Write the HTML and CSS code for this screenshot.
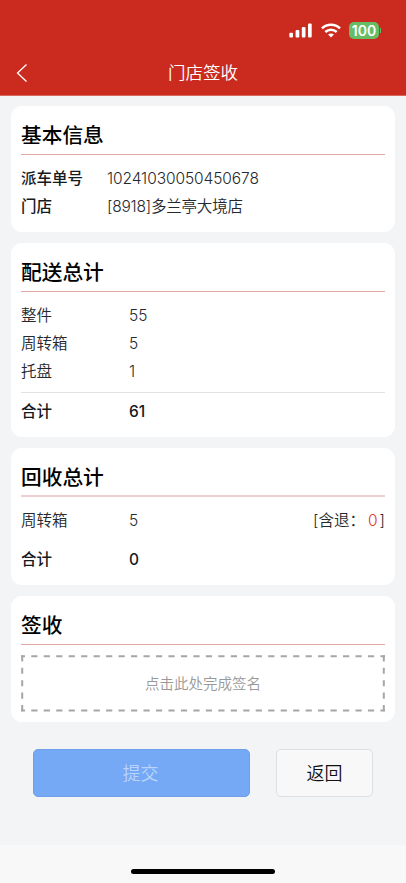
FILE: index.html
```html
<!DOCTYPE html>
<html lang="zh-CN">
<head>
    <meta charset="UTF-8">
    <meta name="viewport" content="width=device-width, initial-scale=1.0">
    <title>门店签收</title>
    <link rel="stylesheet" href="styles.css">
</head>
<body>
    <header class="header">
        <div class="status-bar">
            <svg class="signal" width="24" height="15" viewBox="0 0 24 15" fill="#fff">
                <rect x="0.3" y="9.8" width="3.7" height="4.7" rx="1"/>
                <rect x="6.6" y="7" width="3.7" height="7.5" rx="1"/>
                <rect x="12.8" y="4" width="3.7" height="10.5" rx="1"/>
                <rect x="19" y="0.5" width="3.7" height="14" rx="1"/>
            </svg>
            <svg class="wifi" width="20" height="15" viewBox="0 0 20 15" fill="none" stroke="#fff" stroke-width="2.6">
                <path d="M1 5.4C6 .6 14 .6 19 5.4"/>
                <path d="M4.3 9C7.5 6 12.5 6 15.7 9"/>
                <path d="M10 14.6L7.1 11.6C8.7 10.1 11.3 10.1 12.9 11.6Z" fill="#fff" stroke="none"/>
            </svg>
            <div class="battery"><span class="battery-level">100</span></div>
        </div>
        <div class="nav">
            <svg class="back" width="12" height="20" viewBox="0 0 12 20" fill="none" stroke="#fff" stroke-width="1.3">
                <path d="M10.5 1.5L1.5 10L10.5 18.5"/>
            </svg>
            <h1 class="nav-title">门店签收</h1>
        </div>
    </header>
    <main class="content">
        <section class="card">
            <h2 class="card-title">基本信息</h2>
            <div class="row info"><b>派车单号</b><span class="number">10241030050450678</span></div>
            <div class="row info"><b>门店</b><span class="store">[8918]多兰亭大境店</span></div>
        </section>
        <section class="card delivery">
            <h2 class="card-title">配送总计</h2>
            <div class="row"><span>整件</span><span>55</span></div>
            <div class="row"><span>周转箱</span><span>5</span></div>
            <div class="row"><span>托盘</span><span>1</span></div>
            <div class="row total line"><span>合计</span><span>61</span></div>
        </section>
        <section class="card recycle">
            <h2 class="card-title">回收总计</h2>
            <div class="row"><span>周转箱</span><span>5</span><span class="returned">[含退：<em>0</em>]</span></div>
            <div class="row total"><span>合计</span><span>0</span></div>
        </section>
        <section class="card sign">
            <h2 class="card-title">签收</h2>
            <div class="sign-box">
                <svg class="sign-border" width="364" height="57" viewBox="0 0 364 57" fill="none" stroke="#a6a6a6" stroke-width="2" stroke-dasharray="6.2 6.27">
                    <path d="M0 1.2H364" stroke-dashoffset="2.2"/>
                    <path d="M0 55.5H364" stroke-dashoffset="2.2"/>
                    <path d="M1.2 0.2V56.5"/>
                    <path d="M362.8 0.2V56.5"/>
                </svg>
                <span>点击此处完成签名</span>
            </div>
        </section>
        <div class="actions">
            <button class="btn submit">提交</button>
            <button class="btn cancel">返回</button>
        </div>
    </main>
    <footer class="footer"><div class="home-bar"></div></footer>
</body>
</html>
```

FILE: styles.css
```css
* {
    box-sizing: border-box;
}
body {
    display: flex;
    flex-direction: column;
    height: 883px;
    margin: 0;
    overflow: hidden;
    background: #f3f4f6;
    color: #25282d;
    font-family: Inter, "Noto Sans CJK SC", sans-serif;
    font-size: 15.5px;
}
.header {
    height: 96px;
    background: #ca2b1e;
    border-bottom: 1px solid #d9695f;
    color: #fff;
}
.status-bar {
    display: flex;
    align-items: center;
    height: 50px;
    padding: 10px 24px 0 289px;
}
.wifi {
    margin-left: 8px;
}
.battery {
    display: flex;
    align-items: center;
    margin-left: 8px;
}
.battery::after {
    content: "";
    width: 1px;
    height: 5px;
    margin-left: 1px;
    background: #66bd65;
}
.battery-level {
    width: 30px;
    height: 17px;
    border-radius: 5px;
    background: #66bd65;
    font-size: 14px;
    font-weight: 600;
    line-height: 17px;
    text-align: center;
}
.nav {
    display: grid;
    grid-template-columns: 28px 1fr 28px;
    align-items: center;
    height: 45px;
    padding-left: 16px;
    padding-right: 16px;
}
.nav-title {
    margin: 0;
    font-size: 17.5px;
    font-weight: 350;
    line-height: 24px;
    text-align: center;
}
.content {
    display: flex;
    flex-direction: column;
    gap: 11px;
    height: 749px;
    padding: 10px 11px 0;
}
.card {
    height: 126px;
    padding: 10px 10px 0;
    border-radius: 11px;
    background: #fff;
}
.delivery {
    height: 194px;
}
.recycle {
    height: 137px;
}
.card-title {
    height: 39px;
    margin: 0 0 9px;
    border-bottom: 1px solid #e3a7a4;
    color: #000;
    font-size: 20.7px;
    font-weight: 500;
    line-height: 40px;
}
.row {
    display: grid;
    grid-template-columns: 108px 1fr auto;
    height: 28px;
    line-height: 30px;
    font-weight: 350;
}
.info {
    grid-template-columns: 86px 1fr;
}
.info b, .total {
    font-weight: 500;
    color: #16191e;
}
.number {
    letter-spacing: -0.08px;
}
.store {
    letter-spacing: -0.2px;
}
.line {
    height: 33px;
    margin-top: 7px;
    padding-top: 4px;
    border-top: 1px solid #e2e2e2;
}
.recycle .card-title {
    border-bottom: 2px solid #edcdd0;
}
.recycle .total {
    margin-top: 11px;
}
.returned em {
    margin-right: 2px;
    margin-left: 3px;
    color: #d9362b;
    font-style: normal;
}
.sign-box {
    position: relative;
    display: flex;
    align-items: center;
    justify-content: center;
    height: 57px;
    margin-top: 10px;
    padding-bottom: 2px;
    color: #999;
    font-size: 14.5px;
    font-weight: 350;
}
.sign-border {
    position: absolute;
    top: 0;
    left: 0;
}
.actions {
    display: flex;
    gap: 26px;
    padding: 16px 22px 0;
}
.btn {
    width: 97px;
    height: 48px;
    padding: 0 0 2px;
    border: 1px solid #dedfe0;
    border-radius: 5px;
    background: #f8f8f8;
    color: #111;
    font-family: inherit;
    font-size: 18px;
    font-weight: 350;
}
.submit {
    width: 217px;
    padding-right: 2px;
    border-color: #6f9fe6;
    background: #75a8f5;
    color: #bad5fb;
}
.footer {
    flex: 1;
    padding-top: 24px;
    background: #f8f8f8;
}
.home-bar {
    width: 144px;
    height: 5px;
    margin: 0 auto;
    border-radius: 3px;
    background: #000;
}
```
